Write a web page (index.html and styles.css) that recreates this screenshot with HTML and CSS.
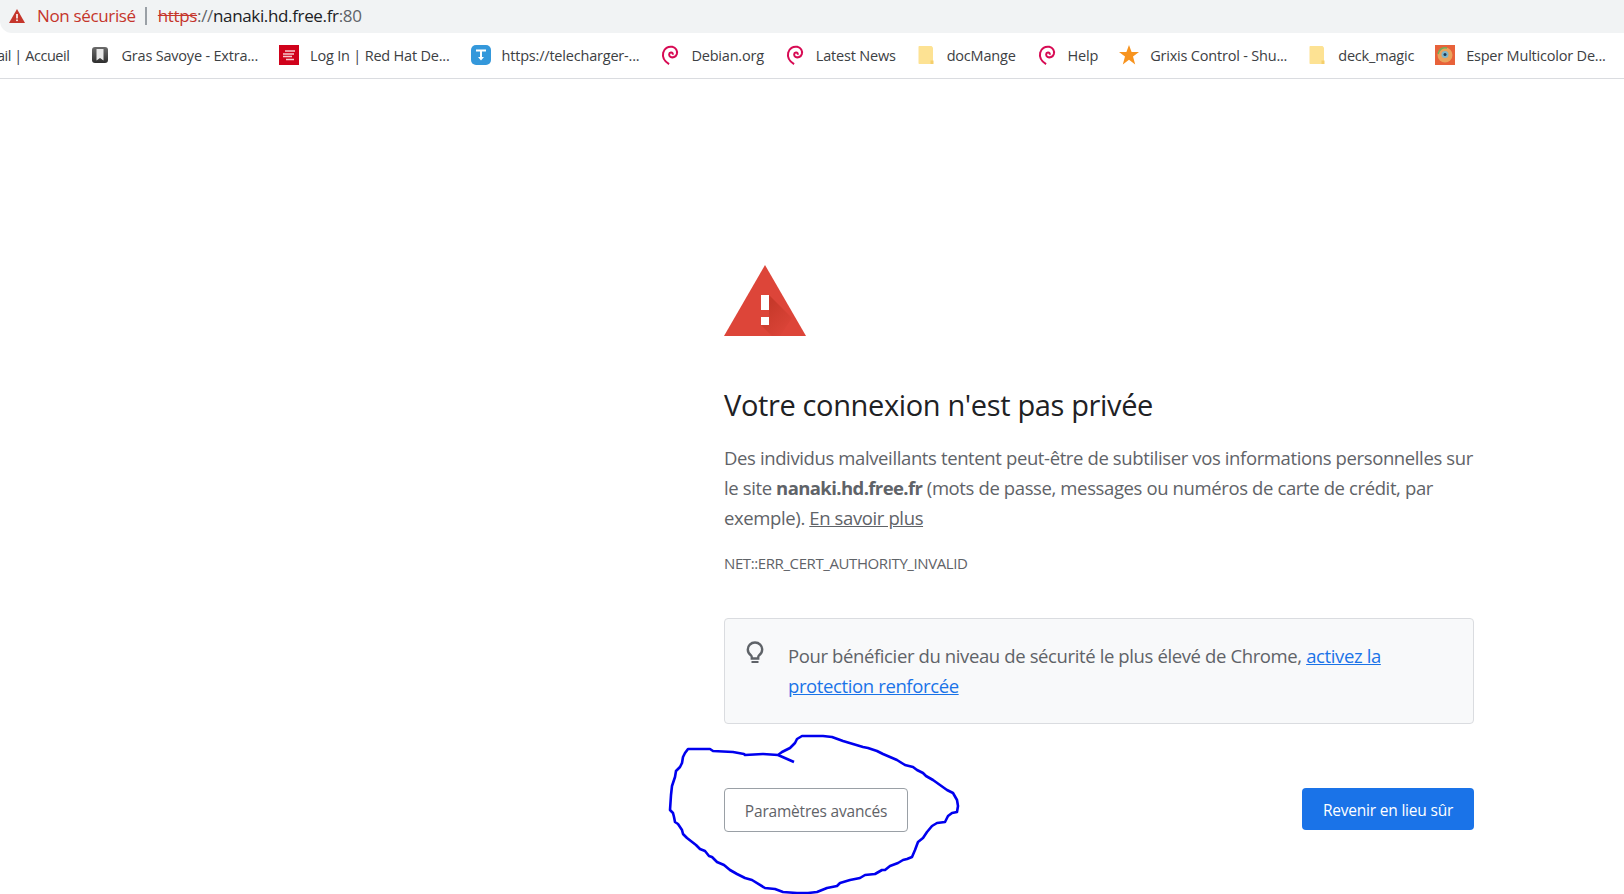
FILE: index.html
```html
<!DOCTYPE html>
<html lang="fr">
  <head>
    <meta charset="UTF-8" />
    <title>Erreur de confidentialité</title>
    <link rel="stylesheet" href="styles.css">
  </head>
  <body>
    <svg class="defs" width="0" height="0">
      <symbol id="debian" viewBox="0 0 20 22">
        <path d="M9 21C4 18 1.500 13 2.500 8.500C3.500 4 8 1 12.500 2C16.500 3 18.500 6.500 17.500 10C16.500 13 13 14.500 10.500 13C8.500 11.800 8.500 8.500 11 8.200C12.500 8 13.500 9.500 12.800 10.800" fill="none" stroke="#d70a53" stroke-width="2.200" />
      </symbol>
      <symbol id="folder" viewBox="0 0 18 20">
        <path d="M2 1H14L15.500 2.500V19H2C1.400 19 1 18.600 1 18V2C1 1.400 1.400 1 2 1Z" fill="#fde293" />
        <path d="M13 19V15.500H16V19Z" fill="#f5cf6b" />
      </symbol>
    </svg>

    <header class="omnibox">
      <svg class="omnibox-icon" viewBox="0 0 16 14" width="16" height="14">
        <path d="M8 0L16 14H0Z" fill="#c5352b" />
        <rect x="7.200" y="5" width="1.600" height="4.500" fill="#fff" />
        <rect x="7.200" y="10.500" width="1.600" height="1.600" fill="#fff" />
      </svg>
      <span class="not-secure">Non sécurisé</span>
      <span class="omnibox-sep"></span>
      <span class="url"><s class="scheme">https</s>://<b>nanaki.hd.free.fr</b>:80</span>
    </header>

    <nav class="bookmarks">
      <a class="bookmark first">ail | Accueil</a>
      <a class="bookmark">
        <svg class="favicon" viewBox="0 0 20 20">
          <defs>
            <linearGradient id="gras" x1="0" y1="0" x2="0" y2="1">
              <stop offset="0" stop-color="#6b6b6b" />
              <stop offset="1" stop-color="#2e2e2e" />
            </linearGradient>
          </defs>
          <rect x="2" y="2" width="16" height="16" rx="3" fill="url(#gras)" />
          <path d="M6.500 4H13.500V15.500L10 13L6.500 15.500Z" fill="#e8e8e8" />
        </svg>
        Gras Savoye - Extra...
      </a>
      <a class="bookmark">
        <svg class="favicon" viewBox="0 0 20 20">
          <rect width="20" height="20" fill="#d0021b" />
          <path d="M6 6H16M4 9H15M4 11.500H13M7 14.500H15" stroke="#f6c9cd" stroke-width="1.500" />
        </svg>
        Log In | Red Hat De...
      </a>
      <a class="bookmark">
        <svg class="favicon" viewBox="0 0 20 20">
          <rect width="20" height="20" rx="5" fill="#3498db" />
          <path d="M5 4.500H15V6.500H11V12L13 12L10 15.500L7 12L9 12V6.500H5Z" fill="#fff" />
        </svg>
        https://telecharger-...
      </a>
      <a class="bookmark"><svg class="favicon"><use href="#debian" /></svg>Debian.org</a>
      <a class="bookmark"><svg class="favicon"><use href="#debian" /></svg>Latest News</a>
      <a class="bookmark"><svg class="favicon favicon-folder"><use href="#folder" /></svg>docMange</a>
      <a class="bookmark"><svg class="favicon"><use href="#debian" /></svg>Help</a>
      <a class="bookmark">
        <svg class="favicon" viewBox="0 0 20 20">
          <path d="M10 0L12.600 7H20L14 11.500L16.200 19.500L10 14.800L3.800 19.500L6 11.500L0 7H7.400Z" fill="#f7931e" />
        </svg>
        Grixis Control - Shu...
      </a>
      <a class="bookmark"><svg class="favicon favicon-folder"><use href="#folder" /></svg>deck_magic</a>
      <a class="bookmark">
        <svg class="favicon" viewBox="0 0 20 20">
          <rect width="20" height="20" fill="#e8623a" />
          <circle cx="10" cy="10" r="7.500" fill="#e9a35c" />
          <path d="M3 9C4 4 8 2 12 3" fill="none" stroke="#6fae5a" stroke-width="1.500" />
          <circle cx="10" cy="9.500" r="3.500" fill="#7fb6c9" />
          <circle cx="10" cy="9.500" r="1.500" fill="#1d3b57" />
        </svg>
        Esper Multicolor De...
      </a>
    </nav>

    <main class="interstitial">
      <svg class="warning" viewBox="0 0 82 71" width="82" height="71">
        <defs>
          <linearGradient id="shade" gradientUnits="userSpaceOnUse" x1="42" y1="42" x2="66" y2="66">
            <stop offset="0" stop-color="#a52714" stop-opacity="0.400" />
            <stop offset="1" stop-color="#a52714" stop-opacity="0" />
          </linearGradient>
        </defs>
        <path d="M41 0L82 71H0Z" fill="#dd4539" />
        <path d="M45 30L68 53L56 71H48L37 60H45V45Z" fill="url(#shade)" />
        <rect x="37" y="30" width="8" height="15" fill="#fff" />
        <rect x="37" y="52" width="8" height="8" fill="#fff" />
      </svg>

      <h1>Votre connexion n'est pas privée</h1>
      <p class="message">
        Des individus malveillants tentent peut-être de subtiliser vos informations personnelles sur
        le site <strong>nanaki.hd.free.fr</strong> (mots de passe, messages ou numéros de carte de crédit, par
        exemple). <a class="learn-more">En savoir plus</a>
      </p>
      <p class="error-code">NET::ERR_CERT_AUTHORITY_INVALID</p>

      <div class="tip">
        <svg class="tip-icon" viewBox="0 0 18 24" width="18" height="24">
          <path d="M9 1.500C4.800 1.500 1.800 4.700 1.800 8.500C1.800 11 3 12.800 4.800 14.200C5.500 14.800 5.800 15.500 5.800 16.500V17.500H12.200V16.500C12.200 15.500 12.500 14.800 13.200 14.200C15 12.800 16.200 11 16.200 8.500C16.200 4.700 13.200 1.500 9 1.500Z" fill="none" stroke="#5f6368" stroke-width="2.400" />
          <rect x="5.500" y="20" width="7" height="2" fill="#5f6368" />
        </svg>
        <p class="tip-text">
          Pour bénéficier du niveau de sécurité le plus élevé de Chrome, <a class="link">activez la
          protection renforcée</a>
        </p>
      </div>

      <div class="actions">
        <button class="btn btn-advanced">Paramètres avancés</button>
        <button class="btn btn-back">Revenir en lieu sûr</button>
      </div>
    </main>

    <!-- annotation tracee a la main par dessus la capture -->
    <svg class="scribble" viewBox="0 0 1624 894" width="1624" height="894">
      <path d="M794 762L778 755L763 754L745 755L744 754L733 752L713 751L710 749L688 749L685 753L683 757L682 763L680 767L676 771L675 777L672 786L671 795L670 810L673 813L674 817L675 822L678 824L682 830L683 834L687 838L696 845L700 849L705 851L709 856L712 857L717 862L724 865L730 870L737 874L745 878L752 880L765 888L775 889L783 892L797 893L808 893L817 892L827 888L837 886L840 883L850 880L860 878L865 875L875 874L882 870L885 870L890 866L898 863L903 860L907 859L912 857L915 850L918 842L923 838L927 832L932 826L937 823L945 822L948 816L952 813L957 812L958 806L957 800L953 793L947 790L940 785L933 780L926 776L923 773L917 770L913 767L905 765L897 760L890 757L883 754L877 751L868 748L863 747L853 744L843 741L832 737L823 736L802 736L797 739L795 743L790 748L784 751L782 752L778 755" />
    </svg>
  </body>
</html>
```

FILE: styles.css
```css
* {
  box-sizing: border-box;
}

html,
body {
  margin: 0;
  height: 894px;
  overflow: hidden;
}

body {
  position: relative;
  background: #ffffff;
  font-family: "Open Sans", "Noto Sans", sans-serif;
  color: #5f6368;
}

.defs {
  position: absolute;
}

/* barre d'adresse */
.omnibox {
  display: flex;
  align-items: center;
  height: 33px;
  padding: 0 0 2px 9px;
  background: #f1f3f4;
  border-bottom-left-radius: 12px;
  font-size: 17px;
  letter-spacing: -0.35px;
}
.omnibox-icon {
  margin-right: 12px;
}
.not-secure {
  color: #c5352b;
}
.omnibox-sep {
  width: 2px;
  height: 18px;
  margin: 0 11px 0 9px;
  background: #9aa0a6;
}
.url {
  color: #5f6368;
}
.url b {
  font-weight: normal;
  color: #202124;
}
.scheme {
  color: #c5352b;
}

/* favoris */
.bookmarks {
  display: flex;
  align-items: center;
  gap: 21px;
  height: 46px;
  padding-bottom: 1px;
  border-bottom: 1px solid #dadce0;
  font-size: 14.500px;
  letter-spacing: -0.2px;
  white-space: nowrap;
  overflow: hidden;
  color: #3c4043;
}
.bookmark {
  display: flex;
  align-items: center;
  gap: 11px;
}
.first {
  margin-left: -3px;
  letter-spacing: -0.45px;
}
.favicon {
  width: 20px;
  height: 20px;
  flex: none;
}
.favicon-folder {
  width: 19px;
}

/* page d'erreur */
.interstitial {
  width: 750px;
  margin-left: 724px;
  padding-top: 186px;
}
.warning {
  display: block;
}
h1 {
  margin: 50px 0 0;
  font-size: 29px;
  line-height: 38px;
  font-weight: 400;
  letter-spacing: -0.36px;
  color: #202124;
}
.message {
  margin: 19px 0 0;
  font-size: 18.500px;
  line-height: 30px;
  letter-spacing: -0.38px;
}
.message strong {
  font-weight: 700;
  letter-spacing: -0.6px;
}
.learn-more {
  text-decoration: underline;
}
.error-code {
  margin: 20px 0 0;
  font-size: 15px;
  line-height: 20px;
  letter-spacing: -0.4px;
}

.tip {
  display: flex;
  gap: 24px;
  height: 106px;
  margin-top: 45px;
  padding: 22px 20px 0 21px;
  background: #f8f9fa;
  border: 1px solid #dadce0;
  border-radius: 4px;
}
.tip-icon {
  flex: none;
}
.tip-text {
  margin: 0;
  font-size: 18.500px;
  line-height: 30px;
  letter-spacing: -0.38px;
}
.link {
  color: #1a73e8;
  text-decoration: underline;
}

.actions {
  display: flex;
  justify-content: space-between;
  align-items: flex-start;
  margin-top: 64px;
}
.btn {
  padding-top: 2px;
  font-family: inherit;
  font-size: 15.500px;
  letter-spacing: -0.2px;
  border-radius: 4px;
}
.btn-advanced {
  width: 184px;
  height: 44px;
  background: #ffffff;
  border: 1px solid #9aa0a6;
  color: #5f6368;
}
.btn-back {
  width: 172px;
  height: 42px;
  background: #1a73e8;
  border: none;
  color: #ffffff;
}

/* le trait bleu */
.scribble {
  position: absolute;
  top: 0;
  left: 0;
  pointer-events: none;
}
.scribble path {
  fill: none;
  stroke: #0000ee;
  stroke-width: 2.600;
  stroke-linejoin: round;
}
```
